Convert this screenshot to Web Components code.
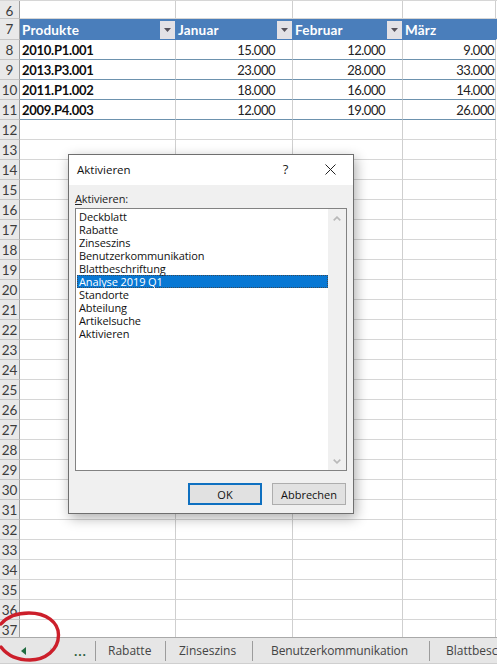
<!DOCTYPE html>
<html>
<head>
<meta charset="utf-8">
<title>Aktivieren</title>
<style>
  html, body { margin: 0; padding: 0; background: #fff; }
  body { width: 497px; height: 665px; overflow: hidden; position: relative; }
</style>
</head>
<body>
<excel-window>
  <sheet-grid></sheet-grid>
  <sheet-tabs></sheet-tabs>
  <activate-dialog></activate-dialog>
  <red-ring></red-ring>
</excel-window>

<script>
// Outer frame: grid on top, tab bar at the bottom
class ExcelWindow extends HTMLElement {
  constructor() {
    super();
    this.attachShadow({ mode: 'open' });
    this.shadowRoot.innerHTML = `
      <style>
        :host {
          display: flex;
          flex-direction: column;
          width: 497px;
          height: 665px;
          position: relative;
          overflow: hidden;
          background: #fff;
        }
      </style>
      <slot></slot>
    `;
  }
}

class SheetGrid extends HTMLElement {
  constructor() {
    super();
    this.attachShadow({ mode: 'open' });
    this.rows = {
      8: ['2010.P1.001', '15.000', '12.000', '9.000'],
      9: ['2013.P3.001', '23.000', '28.000', '33.000'],
      10: ['2011.P1.002', '18.000', '16.000', '14.000'],
      11: ['2009.P4.003', '12.000', '19.000', '26.000']
    };
  }

  connectedCallback() {
    this.render();
  }

  headerCell(text, filter) {
    const btn = filter
      ? `<span class="filter"><svg width="7" height="4" viewBox="0 0 7 4"><path d="M0 0h7L3.5 4z" fill="#55505a"/></svg></span>`
      : '';
    return `<div class="c head">${text}${btn}</div>`;
  }

  renderRow(n) {
    let h = 'r';
    if (n === 6) h += ' first';
    if (n === 7) h += ' title';
    if (n === 37) h += ' last';
    let cells = '';
    if (n === 7) {
      cells = this.headerCell('Produkte', true) + this.headerCell('Januar', true) +
        this.headerCell('Februar', true) + this.headerCell('März', false) + '<div class="c headend"></div>';
    } else if (this.rows[n]) {
      const d = this.rows[n];
      cells = `<div class="c data name">${d[0]}</div>` +
        d.slice(1).map(v => `<div class="c data num">${v}</div>`).join('') + '<div class="c dataend"></div>';
    } else {
      cells = '<div class="c"></div><div class="c"></div><div class="c"></div><div class="c"></div><div class="c"></div>';
    }
    return `<div class="${h}"><div class="rh">${n}</div>${cells}</div>`;
  }

  render() {
    let html = '';
    for (let n = 6; n <= 37; n++) html += this.renderRow(n);
    this.shadowRoot.innerHTML = `
      <style>
        :host {
          display: block;
          height: 637px;
          overflow: hidden;
          border-top: 1px solid #d6d6d6;
          box-sizing: border-box;
          font-family: Lato, "Liberation Sans", sans-serif;
          font-size: 13.5px;
          color: #111;
        }
        .r {
          display: grid;
          grid-template-columns: 20px 156px 117px 110px 93px 1fr;
          height: 20px;
          box-sizing: border-box;
        }
        .r.first { height: 18px; }
        .r.title { height: 21px; }
        .r.last { height: 18px; }
        .rh {
          background: #e9e9e9;
          color: #3c3c3c;
          border-right: 1px solid #9f9f9f;
          border-bottom: 1px solid #c6c6c6;
          font-size: 13.5px;
          text-align: center;
          line-height: 20px;
          white-space: nowrap;
          overflow: hidden;
          display: flex;
          justify-content: center;
        }
        .c {
          border-right: 1px solid #cfcfcf;
          border-bottom: 1px solid #d6d6d6;
          box-sizing: border-box;
          line-height: 19px;
          padding: 0 2px;
          min-width: 0;
          white-space: nowrap;
          overflow: hidden;
        }
        .c:last-child { border-right: 0; }
        .head {
          background: #4a7ebb;
          color: #fff;
          font-weight: 700;
          border-right: 0;
          border-bottom: 0;
          display: flex;
          align-items: center;
          justify-content: space-between;
          padding: 2px 1px 0 2px;
          letter-spacing: .2px;
        }
        .headend { background: linear-gradient(to right, #4a7ebb 2px, #fff 2px); border-bottom-color: #d6d6d6; }
        .filter {
          width: 15px;
          height: 18px;
          margin-top: -2px;
          background: #e3e1e6;
          display: flex;
          align-items: center;
          justify-content: center;
        }
        .data { border-bottom: 1px solid #6d92ae; border-right: 1px solid #cfcfcf; font-size: 13px; line-height: 20px; }
        .name { font-weight: 700; color: #0d0d0d; letter-spacing: -.27px; }
        .num { text-align: right; padding-right: 17px; letter-spacing: -.5px; color: #222; }
        .num:nth-child(5) { padding-right: 1px; }
        .dataend { border-bottom: 0; }
      </style>
      ${html}
    `;
  }
}

class SheetTabs extends HTMLElement {
  constructor() {
    super();
    this.attachShadow({ mode: 'open' });
    this.shadowRoot.innerHTML = `
      <style>
        :host {
          display: flex;
          align-items: center;
          height: 27px;
          flex: none;
          box-sizing: border-box;
          border-top: 1px solid #a9a9a9;
          border-bottom: 1px solid #cfcfcf;
          background: #e6e6e6;
          font-family: "Open Sans", "Liberation Sans", sans-serif;
          font-size: 12px;
          color: #444;
          overflow: hidden;
          white-space: nowrap;
        }
        .nav { width: 95px; flex: none; display: flex; align-items: center; box-sizing: border-box; padding-left: 21px; }
        .nav svg { flex: none; }
        .nav .next { margin-left: 24px; }
        .dots { margin-left: 20px; font-weight: 700; color: #2b5d3c; letter-spacing: .8px; position: relative; top: 1px; }
        .tab {
          flex: none;
          box-sizing: border-box;
          height: 20px;
          line-height: 20px;
          border-left: 1px solid #9c9c9c;
        }
        .t1 { width: 70px; padding-left: 12px; }
        .t2 { width: 87px; padding-left: 13px; }
        .t3 { width: 177px; padding-left: 18px; letter-spacing: -.1px; }
        .t4 { padding-left: 16px; }
      </style>
      <div class="nav">
        <svg width="5" height="8" viewBox="0 0 5 8"><path d="M5 0v8L0 4z" fill="#1f6b3f"/></svg>
        <svg class="next" width="4" height="8" viewBox="0 0 4 8"><path d="M0 0v8l4-4z" fill="#d0d0d0"/></svg>
        <span class="dots">...</span>
      </div>
      <div class="tab t1">Rabatte</div>
      <div class="tab t2">Zinseszins</div>
      <div class="tab t3">Benutzerkommunikation</div>
      <div class="tab t4">Blattbeschriftung</div>
    `;
  }
}

class DialogButton extends HTMLElement {
  constructor() {
    super();
    this.attachShadow({ mode: 'open' });
    this.shadowRoot.innerHTML = `
      <style>
        :host {
          display: flex;
          align-items: center;
          justify-content: center;
          width: 74px;
          height: 22px;
          box-sizing: border-box;
          background: #e1e1e1;
          border: 1px solid #adadad;
          font-size: 11px;
          color: #111;
        }
        :host([default]) { border: 2px solid #0f70c0; }
      </style>
      <slot></slot>
    `;
  }
}

class SheetList extends HTMLElement {
  constructor() {
    super();
    this.attachShadow({ mode: 'open' });
    const names = ['Deckblatt', 'Rabatte', 'Zinseszins', 'Benutzerkommunikation', 'Blattbeschriftung',
      'Analyse 2019 Q1', 'Standorte', 'Abteilung', 'Artikelsuche', 'Aktivieren'];
    const items = names.map(n => `<div class="item${n.startsWith('Analyse') ? ' sel' : ''}">${n}</div>`).join('');
    this.shadowRoot.innerHTML = `
      <style>
        :host {
          display: flex;
          height: 263px;
          box-sizing: border-box;
          border: 1px solid #828282;
          background: #fff;
        }
        .items { flex: 1; padding: 1px 0 0 1px; min-width: 0; }
        .item { height: 13px; line-height: 13px; padding-left: 2px; color: #111; white-space: nowrap; letter-spacing: -.1px; }
        .sel { background: #0878d4; color: #fff; outline: 1px dotted #3a4a58; outline-offset: -1px; }
        .bar {
          width: 18px;
          flex: none;
          background: #f0f0f0;
          display: flex;
          flex-direction: column;
          justify-content: space-between;
          align-items: center;
          padding: 7px 0 6px;
          box-sizing: border-box;
        }
      </style>
      <div class="items">${items}</div>
      <div class="bar">
        <svg width="8" height="5" viewBox="0 0 8 5"><path d="M.7 4.4L4 1.1l3.3 3.3" fill="none" stroke="#b9b9b9" stroke-width="1.6"/></svg>
        <svg width="8" height="5" viewBox="0 0 8 5"><path d="M.7.6L4 3.9 7.3.6" fill="none" stroke="#b9b9b9" stroke-width="1.6"/></svg>
      </div>
    `;
  }
}

class ActivateDialog extends HTMLElement {
  constructor() {
    super();
    this.attachShadow({ mode: 'open' });
    this.shadowRoot.innerHTML = `
      <style>
        :host {
          position: absolute;
          left: 68px;
          top: 154px;
          width: 286px;
          height: 360px;
          box-sizing: border-box;
          display: flex;
          flex-direction: column;
          background: #f0f0f0;
          border: 1px solid #6f6f6f;
          box-shadow: 2px 4px 12px rgba(0,0,0,.32);
          font-family: "Open Sans", "Liberation Sans", sans-serif;
          font-size: 11px;
          color: #111;
        }
        .title {
          height: 30px;
          flex: none;
          box-sizing: border-box;
          background: #fff;
          display: flex;
          align-items: center;
          padding: 0 0 2px 8px;
          font-size: 11.5px;
        }
        .title .name { flex: 1; }
        .title .help { font-size: 13px; color: #222; width: 45px; text-align: center; }
        .title .close { width: 45px; display: flex; justify-content: center; }
        .body { flex: 1; display: flex; flex-direction: column; padding: 7px 6px; min-height: 0; }
        .label { height: 16px; line-height: 14px; font-size: 11px; color: #222; letter-spacing: -.1px; }
        .label u { text-underline-offset: 1px; }
        .foot { display: flex; justify-content: flex-end; gap: 10px; margin-top: 12px; padding-right: 1px; }
      </style>
      <div class="title">
        <span class="name">Aktivieren</span>
        <span class="help">?</span>
        <span class="close"><svg width="11" height="11" viewBox="0 0 11 11"><path d="M.5.5l10 10M10.5.5l-10 10" stroke="#222" stroke-width="1" fill="none"/></svg></span>
      </div>
      <div class="body">
        <div class="label"><u>A</u>ktivieren:</div>
        <sheet-list></sheet-list>
        <div class="foot">
          <dialog-button default>OK</dialog-button>
          <dialog-button>Abbrechen</dialog-button>
        </div>
      </div>
    `;
  }
}

// Hand drawn red marker round the scroll arrow
class RedRing extends HTMLElement {
  constructor() {
    super();
    this.attachShadow({ mode: 'open' });
    this.shadowRoot.innerHTML = `
      <style>
        :host { position: absolute; left: 0; top: 608px; width: 66px; height: 58px; display: block; }
        svg { display: block; }
      </style>
      <svg width="66" height="58" viewBox="0 0 66 58">
        <path d="M1 16C7 9 17 5 29 5C46 5 58.5 14 58.5 27C58.5 42 45 52 30 52C17 52 7 47 1 39" fill="none" stroke="#cc1f2b" stroke-width="3.4" stroke-linecap="round"/>
      </svg>
    `;
  }
}

customElements.define('excel-window', ExcelWindow);
customElements.define('sheet-grid', SheetGrid);
customElements.define('sheet-tabs', SheetTabs);
customElements.define('dialog-button', DialogButton);
customElements.define('sheet-list', SheetList);
customElements.define('activate-dialog', ActivateDialog);
customElements.define('red-ring', RedRing);
</script>
</body>
</html>
